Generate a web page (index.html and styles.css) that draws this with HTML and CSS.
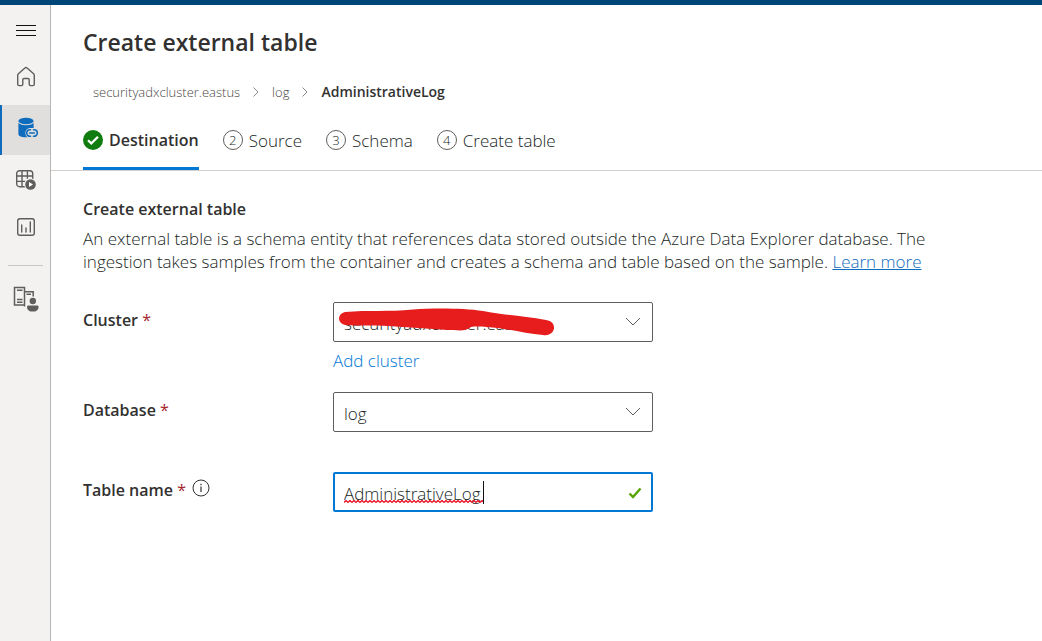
FILE: index.html
```html
<!DOCTYPE html>
<html lang="en">
<head>
<meta charset="utf-8">
<title>Create external table</title>
<meta name="viewport" content="width=device-width, initial-scale=1">
<link rel="stylesheet" href="styles.css">
</head>
<body>
<div class="topbar"></div>
<div class="shell">
  <nav class="rail" aria-label="Main">
    <button class="rail-item rail-menu" type="button" aria-label="Menu">
      <svg width="20" height="14" viewBox="0 0 20 14" stroke="#111" fill="none" shape-rendering="crispEdges"><path d="M0 1.500h20M0 6.500h20M0 11.500h20"/></svg>
    </button>
    <a class="rail-item rail-home" href="#" aria-label="Home">
      <svg width="20" height="22" viewBox="0 0 20 22" fill="none" stroke="#605e5c" stroke-width="1.400" stroke-linejoin="round"><path d="M1.700 9.200Q1.700 8.300 2.400 7.700L8.900 2Q10 1.100 11.100 2l6.500 5.700q.7.600.7 1.500v9q0 1.400-1.400 1.400h-2.300q-1.400 0-1.400-1.400v-4.500q0-1.200-1.200-1.200H8q-1.200 0-1.200 1.200v4.500q0 1.400-1.400 1.400H3.100q-1.400 0-1.400-1.400z"/></svg>
    </a>
    <a class="rail-item rail-active" href="#" aria-label="Data" aria-current="page">
      <svg width="22" height="22" viewBox="0 0 22 22"><ellipse cx="9" cy="4" rx="7.600" ry="3.200" fill="#0f6cbd"/><path d="M1.400 5.800C3 7.600 6 8.200 9 8.200s6-.6 7.600-2.400V11h-3.100c-3.200 0-5.100 2.300-5.100 5 0 1.900.8 3.400 2.200 4.200-4.500.5-9.200-.5-9.200-3.200z" fill="#0f6cbd"/><path d="M13.500 12.700h-.5a3.300 3.300 0 0 0 0 6.600h.5M16.500 12.700h.5a3.300 3.300 0 0 1 0 6.600h-.5M12.600 16h4.800" fill="none" stroke="#0f6cbd" stroke-width="1.600" stroke-linecap="round"/></svg>
    </a>
    <a class="rail-item" href="#" aria-label="Query">
      <svg width="22" height="22" viewBox="0 0 22 22" fill="none" stroke="#605e5c" stroke-width="1.400"><rect x="1.700" y="1.700" width="16" height="16" rx="2.800"/><path d="M7 1.700v16M12.400 1.700v8M1.700 7h16M1.700 12.400h9"/><circle cx="15.500" cy="15.500" r="6.300" fill="#f3f2f1" stroke="none"/><circle cx="15.500" cy="15.500" r="5.300" fill="#605e5c" stroke="none"/><path d="M14 12.900l4 2.600-4 2.600z" fill="#fff" stroke="none"/></svg>
    </a>
    <a class="rail-item rail-charts" href="#" aria-label="Dashboards">
      <svg width="20" height="20" viewBox="0 0 20 20" fill="none" stroke="#605e5c" stroke-width="1.400"><rect x="1.700" y="1.700" width="16.600" height="16.600" rx="2.200"/><path d="M5.700 8v7M10 11v4M14.300 5v10" stroke-linecap="round"/></svg>
    </a>
    <hr class="rail-line">
    <a class="rail-item" href="#" aria-label="My cluster">
      <svg width="28" height="28" viewBox="0 0 28 28" fill="none" stroke="#605e5c" stroke-width="1.500"><path d="M2.500 2.500h10v17.500h-10zM5 5.300h5.500M5 14.500h5.500M5 17.300h5.500M12.500 6.700h8.700v4.800M14.500 9.300h4.500M12.500 20v1.500"/><circle cx="20.800" cy="16" r="3.200" fill="#605e5c" stroke="none"/><path d="M15 21.900q0-1.400 1.400-1.400h8.800q1.400 0 1.400 1.400c0 3-2.600 4.700-5.800 4.700s-5.800-1.700-5.800-4.700z" fill="#605e5c" stroke="none"/></svg>
    </a>
  </nav>
  <main class="main">
    <header class="header">
      <h1 class="title">Create external table</h1>
      <nav class="crumbs" aria-label="Breadcrumb">
        <a class="crumb" href="#">securityadxcluster.eastus</a>
        <svg class="crumb-sep" width="8" height="12" viewBox="0 0 8 12"><path d="M1.500 1.500L6 6l-4.500 4.500"/></svg>
        <a class="crumb" href="#">log</a>
        <svg class="crumb-sep" width="8" height="12" viewBox="0 0 8 12"><path d="M1.500 1.500L6 6l-4.500 4.500"/></svg>
        <a class="crumb crumb-current" href="#" aria-current="page">AdministrativeLog</a>
      </nav>
      <div class="steps">
        <button class="step step-active" type="button">
          <svg class="step-done" width="20" height="20" viewBox="0 0 20 20"><circle cx="10" cy="10" r="10" fill="#107c10"/><path d="M5 10.200l3.300 3.200L15 6.700" fill="none" stroke="#fff" stroke-width="2.200"/></svg>
          Destination
        </button>
        <button class="step" type="button"><span class="step-num">2</span>Source</button>
        <button class="step" type="button"><span class="step-num">3</span>Schema</button>
        <button class="step" type="button"><span class="step-num">4</span>Create table</button>
      </div>
    </header>
    <section class="content">
      <h2 class="subtitle">Create external table</h2>
      <p class="intro">An external table is a schema entity that references data stored outside the Azure Data Explorer database. The ingestion takes samples from the container and creates a schema and table based on the sample. <a class="learn" href="#">Learn more</a></p>
      <form class="form">
        <div class="row">
          <label class="label" for="cluster">Cluster <span class="req">*</span></label>
          <div class="field">
            <div class="control">
              <select class="box" id="cluster"><option>securityadxcluster.eastus</option></select>
              <svg class="chevron" width="16" height="10" viewBox="0 0 16 10"><path d="M1 1l7 7 7-7"/></svg>
              <svg class="scribble" width="218" height="28" viewBox="0 0 218 28"><path d="M7 4C30 2 50 4 75 1.500C95 0 125 0 145 3C165 7 185 8 208 12C221 14 217 29 205 27C190 26 175 22 160 20C148 19 140 18 133 19C127 24 120 22 110 22C90 21 70 19 50 18C35 17 20 18 7 17C-1 15-1 6 7 4z" fill="#e71d1d"/></svg>
            </div>
            <a class="add" href="#">Add cluster</a>
          </div>
        </div>
        <div class="row">
          <label class="label" for="database">Database <span class="req">*</span></label>
          <div class="field">
            <div class="control">
              <select class="box" id="database"><option>log</option></select>
              <svg class="chevron" width="16" height="10" viewBox="0 0 16 10"><path d="M1 1l7 7 7-7"/></svg>
            </div>
          </div>
        </div>
        <div class="row">
          <div class="label label-info">
            <label for="table-name">Table name <span class="req">*</span></label>
            <svg class="info" width="18" height="18" viewBox="0 0 18 18"><circle cx="9" cy="9" r="8" fill="none" stroke="#323130"/><path d="M9 7.500v5.500M9 4.800v1.400" stroke="#323130" stroke-width="1.200"/></svg>
          </div>
          <div class="field">
            <div class="control">
              <input class="box box-focus" id="table-name" type="text" value="AdministrativeLog" spellcheck="false">
              <svg class="squiggle" width="141" height="23" viewBox="0 0 141 23">
                <defs><pattern id="wave" width="4" height="3" y="19" patternUnits="userSpaceOnUse"><path d="M0 2.500L2 .5l2 2" fill="none" stroke="#e81123" stroke-width="1.400"/></pattern></defs>
                <rect y="19" width="139" height="3" fill="url(#wave)"/><path d="M139.500 0v23" stroke="#111"/>
              </svg>
              <svg class="valid" width="14" height="12" viewBox="0 0 14 12"><path d="M1.500 6.500l3.500 3.500L12.500 1.500" fill="none" stroke="#57a300" stroke-width="2.400"/></svg>
            </div>
          </div>
        </div>
      </form>
    </section>
  </main>
</div>
</body>
</html>
```
FILE: styles.css
```css
* { box-sizing: border-box; }

body {
  margin: 0;
  min-height: 100vh;
  display: flex;
  flex-direction: column;
  background: #fff;
  color: #201f1e;
  font: 300 17px/23px "Open Sans", "Noto Sans", sans-serif;
}

svg { display: block; flex: none; }
button { font: inherit; color: inherit; background: none; border: 0; padding: 0; cursor: pointer; }
a { color: #0078d4; text-decoration: none; }

.topbar { height: 5px; background: #004578; }
.shell { flex: 1; display: flex; }

.rail {
  flex: none;
  width: 51px;
  display: flex;
  flex-direction: column;
  background: #f3f2f1;
  border-right: 1px solid #b8b6b4;
}
.rail-item {
  height: 50px;
  display: flex;
  align-items: center;
  justify-content: center;
  border-left: 2px solid transparent;
}
.rail-menu { padding-top: 2px; }
.rail-home, .rail-charts { padding-bottom: 6px; }
.rail-active { background: #e1dfdd; border-left-color: #0f6cbd; padding-left: 4px; padding-bottom: 4px; }
.rail-line { width: 35px; margin: 10px 0 8px 8px; border: 0; border-top: 1px solid #c8c6c4; }

.main { flex: 1; min-width: 0; }
.header { padding: 20px 32px 0; border-bottom: 1px solid #d2d0ce; }
.title { margin: 0; font-size: 23px; line-height: 34px; font-weight: 600; color: #323130; }

.crumbs {
  display: flex;
  align-items: center;
  gap: 12px;
  margin-top: 23px;
  padding-left: 10px;
  font-size: 14px;
  line-height: 20px;
}
.crumb { color: #484644; font-size: 13px; }
.crumb-current { color: #323130; font-size: 14px; font-weight: 600; }
.crumb-sep path { fill: none; stroke: #8a8886; }

.steps { display: flex; gap: 24px; margin-top: 15px; }
.step {
  display: flex;
  align-items: center;
  gap: 6px;
  height: 53px;
  padding-bottom: 4px;
  border-bottom: 3px solid transparent;
}
.step-active { color: #323130; font-size: 16px; font-weight: 600; border-bottom-color: #0078d4; }
.step-num {
  width: 20px;
  height: 20px;
  border: 1px solid #605e5c;
  border-radius: 50%;
  font-size: 13px;
  line-height: 18px;
  text-align: center;
}

.content { padding: 27px 32px; }
.subtitle { margin: 0; font-size: 16px; line-height: 23px; font-weight: 600; color: #323130; }
.intro { margin: 6px 0 0; max-width: 870px; }
.learn { color: #0f6cbd; text-decoration: underline; }

.form { margin-top: 29px; }
.row { display: flex; }
.row + .row { margin-top: 20px; }
.row:last-child { margin-top: 40px; }
.label { width: 250px; padding-top: 7px; font-size: 16px; font-weight: 600; color: #323130; }
.label-info { display: flex; gap: 6px; }
.req { color: #a4262c; font-weight: 400; }
.field { flex: 0 1 320px; min-width: 0; }
.control { position: relative; }
.box {
  display: block;
  width: 100%;
  height: 40px;
  padding: 3px 10px 0;
  appearance: none;
  border: 1px solid #605e5c;
  border-radius: 2px;
  background: #fff;
  color: #201f1e;
  font: inherit;
}
.box-focus { border: 2px solid #0078d4; padding: 3px 9px 0; outline: 0; }
.chevron { position: absolute; right: 12px; top: 15px; pointer-events: none; }
.chevron path { fill: none; stroke: #605e5c; }
.scribble { position: absolute; left: 5px; top: 6px; pointer-events: none; }
.squiggle { position: absolute; left: 11px; top: 9px; pointer-events: none; }
.valid { position: absolute; right: 11px; top: 15px; pointer-events: none; }
.add { display: inline-block; margin-top: 7px; }
```
